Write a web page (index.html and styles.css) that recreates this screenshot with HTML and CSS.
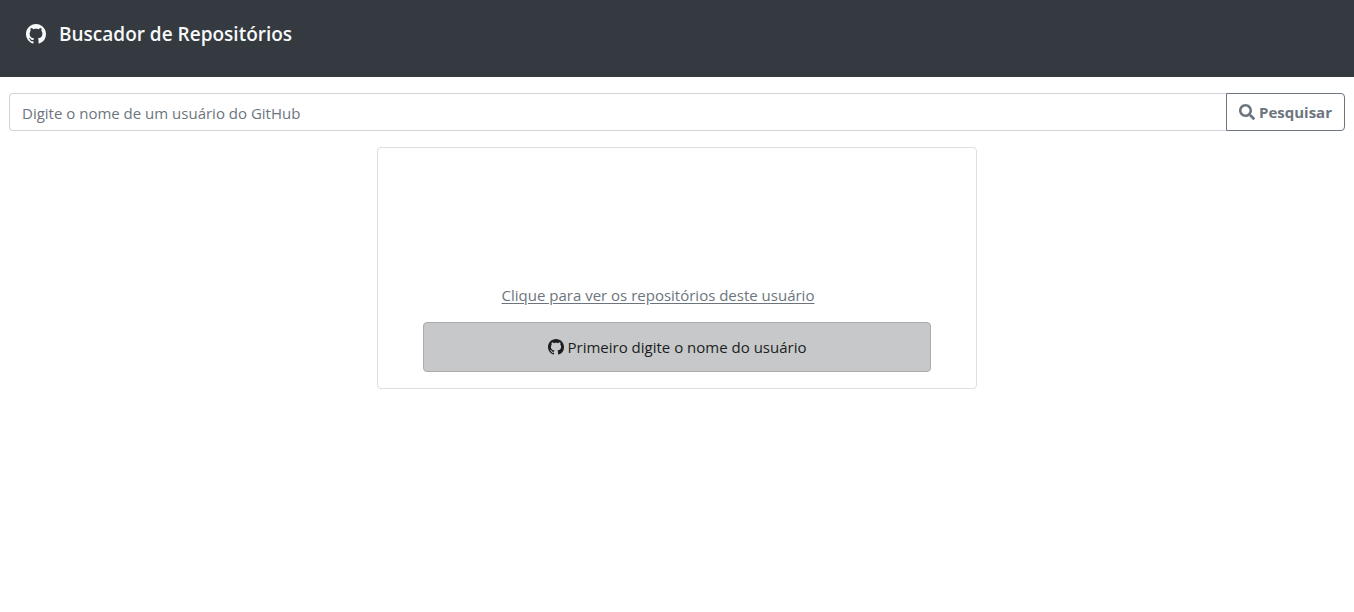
FILE: index.html
```html
<!DOCTYPE html>
<html lang="pt-BR">
<head>
<meta charset="utf-8">
<meta name="viewport" content="width=device-width, initial-scale=1">
<title>Buscador de Repositórios</title>
<link rel="stylesheet" href="styles.css">
</head>
<body>
<svg class="sprite" aria-hidden="true">
  <symbol id="github" viewBox="0 0 16 16"><path d="M8 0C3.58 0 0 3.58 0 8c0 3.54 2.29 6.53 5.47 7.59.4.07.55-.17.55-.38 0-.19-.01-.82-.01-1.49-2.01.37-2.53-.49-2.69-.94-.09-.23-.48-.94-.82-1.13-.28-.15-.68-.52-.01-.53.63-.01 1.08.58 1.23.82.72 1.21 1.87.87 2.33.66.07-.52.28-.87.51-1.07-1.78-.2-3.64-.89-3.64-3.95 0-.87.31-1.59.82-2.15-.08-.2-.36-1.02.08-2.12 0 0 .67-.21 2.2.82.64-.18 1.32-.27 2-.27s1.36.09 2 .27c1.53-1.04 2.2-.82 2.2-.82.44 1.1.16 1.92.08 2.12.51.56.82 1.27.82 2.15 0 3.07-1.87 3.75-3.65 3.95.29.25.54.73.54 1.48 0 1.07-.01 1.93-.01 2.200 0 .21.15.46.55.38A8.01 8.01 0 0 0 16 8c0-4.420-3.580-8-8-8z"/></symbol>
  <symbol id="search" viewBox="0 0 512 512"><path d="M505 442.700L405.300 343c-4.500-4.500-10.600-7-17-7H372c27.600-35.300 44-79.700 44-128C416 93.100 322.900 0 208 0S0 93.100 0 208s93.100 208 208 208c48.300 0 92.700-16.400 128-44v16.300c0 6.400 2.500 12.500 7 17l99.700 99.700c9.400 9.400 24.600 9.400 33.900 0l28.300-28.300c9.400-9.400 9.400-24.600.1-34zM208 336c-70.700 0-128-57.200-128-128 0-70.700 57.200-128 128-128 70.700 0 128 57.200 128 128 0 70.700-57.200 128-128 128z"/></symbol>
</svg>
<header class="navbar">
  <svg class="brand-icon" aria-hidden="true"><use href="#github"/></svg>
  <h1 class="brand-title">Buscador de Repositórios</h1>
</header>
<main>
  <form class="search">
    <input class="search-input" type="text" placeholder="Digite o nome de um usuário do GitHub" aria-label="Nome de usuário do GitHub">
    <button class="search-button" type="button"><svg class="icon" aria-hidden="true"><use href="#search"/></svg>Pesquisar</button>
  </form>
  <section class="card">
    <a class="card-link" href="#repositorios">Clique para ver os repositórios deste usuário</a>
    <button class="card-button" type="button"><svg class="icon" aria-hidden="true"><use href="#github"/></svg>Primeiro digite o nome do usuário</button>
  </section>
</main>
</body>
</html>
```
FILE: styles.css
```css
* { box-sizing: border-box; }

body {
  margin: 0;
  background: #fff;
  color: #212529;
  font-family: "Segoe UI", "Open Sans", "Noto Sans", sans-serif;
  font-size: 15px;
  line-height: 24px;
}

.sprite { display: none; }

.navbar {
  display: flex;
  align-items: flex-start;
  gap: 13px;
  padding: 19px 26px 28px;
  background: #343a40;
  color: #f8f9fa;
}

.brand-icon {
  width: 20px;
  height: 20px;
  margin-top: 5px;
  fill: currentColor;
}

.brand-title {
  margin: 0;
  font-size: 19px;
  font-weight: 600;
  line-height: 30px;
}

.search {
  display: flex;
  margin: 16px 9px;
}

.search-input,
.search-button {
  height: 38px;
  padding: 6px 12px;
  font: inherit;
}

.search-input {
  flex: 1;
  min-width: 0;
  padding-top: 8px;
  border: 1px solid #ced4da;
  border-right: 0;
  border-radius: 4px 0 0 4px;
  color: #495057;
}

.search-input::placeholder { color: #6c757d; opacity: 1; }

.search-button {
  display: flex;
  align-items: center;
  gap: 4px;
  border: 1px solid #6c757d;
  border-radius: 0 4px 4px 0;
  background: #fff;
  color: #6c757d;
  font-weight: 700;
}

.icon {
  flex: none;
  width: 16px;
  height: 16px;
  fill: currentColor;
}

.card {
  display: flex;
  flex-direction: column;
  align-items: center;
  max-width: 600px;
  margin: 0 auto;
  padding: 135px 45px 16px;
  border: 1px solid #dfdfdf;
  border-radius: 4px;
}

.card-link {
  margin-right: 38px;
  color: #6c757d;
  text-underline-offset: 2px;
}

.card-button {
  display: flex;
  align-items: center;
  justify-content: center;
  gap: 4px;
  width: 100%;
  margin-top: 15px;
  padding: 12px 20px;
  border: 1px solid #a9abad;
  border-radius: 4px;
  background: #c6c8ca;
  color: #1b1e21;
  font: inherit;
}
```
